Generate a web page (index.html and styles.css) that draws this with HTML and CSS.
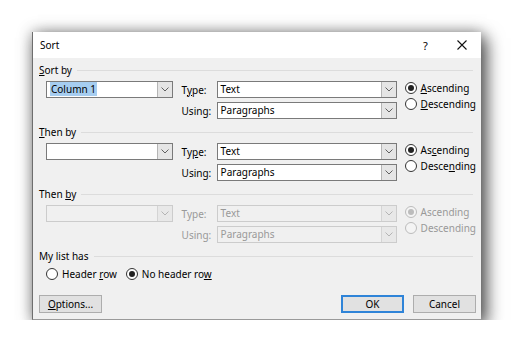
FILE: index.html
```html
<!DOCTYPE html>
<html lang="en">
<head>
    <meta charset="UTF-8" />
    <meta name="viewport" content="width=device-width, initial-scale=1.0" />
    <title>Sort</title>
    <link rel="stylesheet" href="styles.css">
</head>
<body>
    <div class="dialog">
        <div class="titlebar">
            <span class="title">Sort</span>
            <span class="help">?</span>
            <span class="close">
                <svg width="10" height="10" viewBox="0 0 10 10"><path d="M0.5 0.5 L9.5 9.5 M9.5 0.5 L0.5 9.5" stroke="#111" stroke-width="1.1" fill="none"/></svg>
            </span>
        </div>

        <div class="content">
            <!-- Sort by -->
            <div class="group">
                <div class="group-head"><span><u>S</u>ort by</span><span class="rule"></span></div>
                <div class="group-row">
                    <div class="combo key">
                        <span class="value"><span class="selected">Column 1</span></span>
                        <span class="drop"><svg width="8" height="5" viewBox="0 0 8 5"><path d="M0.5 0.5 L4 4 L7.5 0.5" stroke="#606060" fill="none"/></svg></span>
                    </div>
                    <div class="fields">
                        <div class="field">
                            <span class="field-label">T<u>y</u>pe:</span>
                            <div class="combo wide">
                                <span class="value">Text</span>
                                <span class="drop"><svg width="8" height="5" viewBox="0 0 8 5"><path d="M0.5 0.5 L4 4 L7.5 0.5" stroke="#606060" fill="none"/></svg></span>
                            </div>
                        </div>
                        <div class="field">
                            <span class="field-label">Using:</span>
                            <div class="combo wide">
                                <span class="value">Paragraphs</span>
                                <span class="drop"><svg width="8" height="5" viewBox="0 0 8 5"><path d="M0.5 0.5 L4 4 L7.5 0.5" stroke="#606060" fill="none"/></svg></span>
                            </div>
                        </div>
                    </div>
                    <div class="order">
                        <div class="radio checked"><span class="circle"></span><span><u>A</u>scending</span></div>
                        <div class="radio"><span class="circle"></span><span><u>D</u>escending</span></div>
                    </div>
                </div>
            </div>

            <!-- Then by -->
            <div class="group">
                <div class="group-head"><span><u>T</u>hen by</span><span class="rule"></span></div>
                <div class="group-row">
                    <div class="combo key">
                        <span class="value"></span>
                        <span class="drop"><svg width="8" height="5" viewBox="0 0 8 5"><path d="M0.5 0.5 L4 4 L7.5 0.5" stroke="#606060" fill="none"/></svg></span>
                    </div>
                    <div class="fields">
                        <div class="field">
                            <span class="field-label">Ty<u>p</u>e:</span>
                            <div class="combo wide">
                                <span class="value">Text</span>
                                <span class="drop"><svg width="8" height="5" viewBox="0 0 8 5"><path d="M0.5 0.5 L4 4 L7.5 0.5" stroke="#606060" fill="none"/></svg></span>
                            </div>
                        </div>
                        <div class="field">
                            <span class="field-label">Using:</span>
                            <div class="combo wide">
                                <span class="value">Paragraphs</span>
                                <span class="drop"><svg width="8" height="5" viewBox="0 0 8 5"><path d="M0.5 0.5 L4 4 L7.5 0.5" stroke="#606060" fill="none"/></svg></span>
                            </div>
                        </div>
                    </div>
                    <div class="order">
                        <div class="radio checked"><span class="circle"></span><span>As<u>c</u>ending</span></div>
                        <div class="radio"><span class="circle"></span><span>Desce<u>n</u>ding</span></div>
                    </div>
                </div>
            </div>

            <!-- Then by (disabled) -->
            <div class="group disabled">
                <div class="group-head"><span class="active-text">Then <u>b</u>y</span><span class="rule"></span></div>
                <div class="group-row">
                    <div class="combo key">
                        <span class="value"></span>
                        <span class="drop"><svg width="8" height="5" viewBox="0 0 8 5"><path d="M0.5 0.5 L4 4 L7.5 0.5" stroke="#b4b4b4" fill="none"/></svg></span>
                    </div>
                    <div class="fields">
                        <div class="field">
                            <span class="field-label">Type:</span>
                            <div class="combo wide">
                                <span class="value">Text</span>
                                <span class="drop"><svg width="8" height="5" viewBox="0 0 8 5"><path d="M0.5 0.5 L4 4 L7.5 0.5" stroke="#b4b4b4" fill="none"/></svg></span>
                            </div>
                        </div>
                        <div class="field">
                            <span class="field-label">Using:</span>
                            <div class="combo wide">
                                <span class="value">Paragraphs</span>
                                <span class="drop"><svg width="8" height="5" viewBox="0 0 8 5"><path d="M0.5 0.5 L4 4 L7.5 0.5" stroke="#b4b4b4" fill="none"/></svg></span>
                            </div>
                        </div>
                    </div>
                    <div class="order">
                        <div class="radio checked"><span class="circle"></span><span>Ascending</span></div>
                        <div class="radio"><span class="circle"></span><span>Descending</span></div>
                    </div>
                </div>
            </div>

            <!-- My list has -->
            <div class="list-group">
                <div class="group-head"><span>My list has</span><span class="rule"></span></div>
                <div class="list-row">
                    <div class="radio"><span class="circle"></span><span>Header <u>r</u>ow</span></div>
                    <div class="radio checked"><span class="circle"></span><span>No header ro<u>w</u></span></div>
                </div>
            </div>

            <div class="buttons">
                <button class="btn"><u>O</u>ptions...</button>
                <span class="spacer"></span>
                <button class="btn default">OK</button>
                <button class="btn">Cancel</button>
            </div>
        </div>
    </div>
</body>
</html>
```

FILE: styles.css
```css
body {
    margin: 0;
    padding: 32px 0 0 32px;
    background-color: #ffffff;
    font-family: "Noto Sans", "Open Sans", sans-serif;
    font-size: 10px;
    color: #000000;
}

.dialog {
    width: 449px;
    height: 288px;
    background-color: #f0f0f0;
    border-left: 1px solid #6e6e6e;
    border-bottom: 1px solid #9a9a9a;
    box-shadow: 6px 6px 16px rgba(0, 0, 0, 0.6), 0 0 14px rgba(0, 0, 0, 0.35);
    display: flex;
    flex-direction: column;
    box-sizing: border-box;
}

/* Title bar */
.titlebar {
    height: 26px;
    background-color: #ffffff;
    display: flex;
    align-items: center;
    padding-left: 7px;
}

.title {
    flex: 1;
}

.help {
    width: 14px;
    font-size: 11px;
    margin-right: 20px;
}

.close {
    display: flex;
    margin-right: 14px;
}

/* Content */
.content {
    padding: 5px 5px 0 6px;
    display: flex;
    flex-direction: column;
}

.group {
    height: 62px;
}

.group-head {
    height: 14px;
    display: flex;
    align-items: center;
}

.rule {
    flex: 1;
    margin-left: 5px;
    margin-right: 3px;
    border-top: 1px solid #dcdcdc;
}

.group-row {
    display: flex;
    align-items: flex-start;
    margin-top: 4px;
}

.combo {
    height: 17px;
    box-sizing: border-box;
    border: 1px solid #7a7a7a;
    background-color: #ffffff;
    display: flex;
}

.combo .value {
    flex: 1;
    padding-left: 3px;
    line-height: 15px;
    white-space: nowrap;
}

.combo .drop {
    width: 14px;
    background-color: #e5e5e5;
    border-left: 1px solid #b5b5b5;
    display: flex;
    align-items: center;
    justify-content: center;
}

.key {
    width: 130px;
    margin-left: 7px;
}

.selected {
    background-color: #a6cdf0;
    padding: 0 1px;
}

.fields {
    margin-left: 9px;
    display: flex;
    flex-direction: column;
    gap: 4px;
}

.field {
    display: flex;
    align-items: center;
}

.field-label {
    width: 35px;
}

.wide {
    width: 180px;
}

.order {
    margin-left: 8px;
    display: flex;
    flex-direction: column;
    gap: 2px;
}

.radio {
    height: 14px;
    display: flex;
    align-items: center;
}

.circle {
    width: 12px;
    height: 12px;
    box-sizing: border-box;
    border: 1px solid #333333;
    border-radius: 50%;
    background-color: #ffffff;
    margin-right: 4px;
    display: flex;
    align-items: center;
    justify-content: center;
}

.checked .circle::after {
    content: "";
    width: 6px;
    height: 6px;
    border-radius: 50%;
    background-color: #222222;
}

/* Disabled group */
.disabled {
    color: #999999;
}

.disabled .active-text {
    color: #000000;
}

.disabled .combo {
    border-color: #cccccc;
    background-color: #f0f0f0;
}

.disabled .combo .drop {
    background-color: #e8e8e8;
    border-left-color: #d4d4d4;
}

.disabled .circle {
    border-color: #bcbcbc;
    background-color: #f4f4f4;
}

.disabled .checked .circle::after {
    background-color: #bcbcbc;
}

/* My list has */
.list-group {
    height: 32px;
}

.list-row {
    display: flex;
    gap: 9px;
    margin-top: 4px;
    padding-left: 7px;
}

/* Buttons */
.buttons {
    display: flex;
    gap: 9px;
    margin-top: 14px;
}

.spacer {
    flex: 1;
}

.btn {
    width: 63px;
    height: 18px;
    box-sizing: border-box;
    background-color: #e1e1e1;
    border: 1px solid #adadad;
    font-family: inherit;
    font-size: 10px;
    color: #000000;
    padding: 0;
}

.btn.default {
    border-color: #2f84d8;
    box-shadow: inset 0 0 0 1px #2f84d8;
}
```
